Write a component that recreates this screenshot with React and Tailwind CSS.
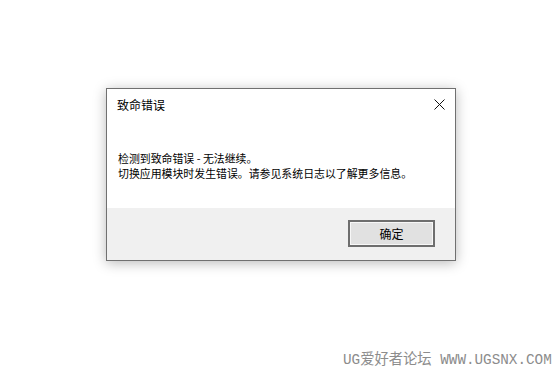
export default function App() {
  return (
    <div className="flex h-[372px] w-[556px] flex-col bg-white" style={{ fontFamily: '"Noto Sans CJK SC", "Noto Sans", sans-serif' }}>
      <div className="ml-[106px] mt-[88px] flex h-[173px] w-[350px] flex-col border border-[#707070] bg-white shadow-[0_2px_12px_rgba(0,0,0,0.28)]">
        {/* 标题栏 */}
        <div className="flex h-[31px] items-center justify-between pl-[10px] pr-[10px]">
          <span className="text-[12px] leading-none text-black">致命错误</span>
          <svg width="11" height="11" viewBox="0 0 11 11">
            <path d="M0.5 0.5 L10.5 10.5 M10.5 0.5 L0.5 10.5" stroke="#111" strokeWidth="1" />
          </svg>
        </div>
        {/* 内容 */}
        <div className="h-[88px] pl-[11px] pt-[31px] text-[10.9px] leading-[14.5px] text-black">
          <div>检测到致命错误 - 无法继续。</div>
          <div>切换应用模块时发生错误。请参见系统日志以了解更多信息。</div>
        </div>
        {/* 按钮区 */}
        <div className="flex flex-1 items-start justify-end bg-[#f0f0f0] pr-[20px] pt-[12px]">
          <button className="flex h-[27px] w-[87px] items-center justify-center border-2 border-[#6e6e6e] bg-[#e1e1e1] text-[12px] leading-none text-black shadow-[inset_0_0_0_1px_#f7f7f7]">
            确定
          </button>
        </div>
      </div>
      <div className="ml-[343px] mt-[92px] text-[14.3px] leading-none text-[#8c8c8c]" style={{ fontFamily: '"Liberation Mono", "Noto Sans CJK SC", monospace' }}>
        UG爱好者论坛 WWW.UGSNX.COM
      </div>
    </div>
  )
}
